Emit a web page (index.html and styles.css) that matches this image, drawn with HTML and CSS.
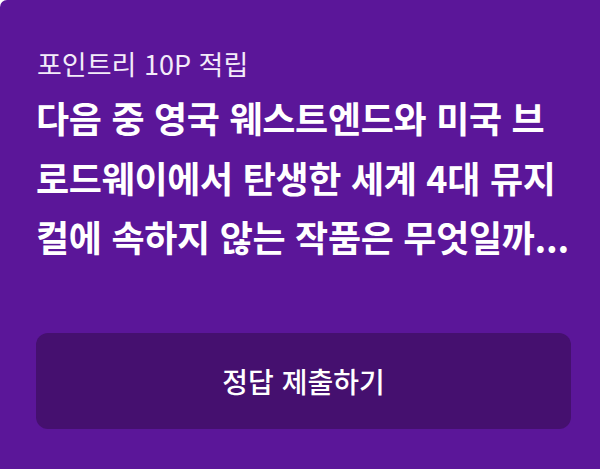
FILE: index.html
```html
<!DOCTYPE html>
<html lang="ko">
<head>
<meta charset="utf-8">
<title>포인트리 퀴즈</title>
<link rel="stylesheet" href="styles.css">
</head>
<body>
<main class="card">
  <p class="reward">포인트리 10P 적립</p>
  <h1 class="question">다음 중 영국 웨스트엔드와 미국 브<br>로드웨이에서 탄생한 세계 4대 뮤지<br>컬에 속하지 않는 작품은 무엇일까...</h1>
  <button class="submit" type="button">정답 제출하기</button>
</main>
</body>
</html>
```

FILE: styles.css
```css
html, body {
  margin: 0;
  padding: 0;
  background: #ffffff;
}

.card {
  box-sizing: border-box;
  width: 600px;
  height: 469px;
  background: #5b1699;
  border-top-left-radius: 7px;
  padding: 46px 29px 0 36px;
  display: flex;
  flex-direction: column;
  font-family: "Noto Sans CJK KR", "Noto Sans", sans-serif;
  color: #ffffff;
}

.reward {
  margin: 0;
  font-size: 27px;
  line-height: 36px;
  font-weight: 400;
  color: #f3ecf9;
  padding-left: 1px;
}

.question {
  margin: 6px 0 0 0;
  font-size: 36px;
  line-height: 59.5px;
  font-weight: 700;
  letter-spacing: -0.3px;
  white-space: nowrap;
}

.submit {
  margin-top: 66px;
  height: 96px;
  width: 100%;
  border: none;
  border-radius: 12px;
  background: #45106f;
  color: #ffffff;
  font-family: "Noto Sans CJK KR", "Noto Sans", sans-serif;
  font-size: 28px;
  font-weight: 500;
  cursor: pointer;
}
```
